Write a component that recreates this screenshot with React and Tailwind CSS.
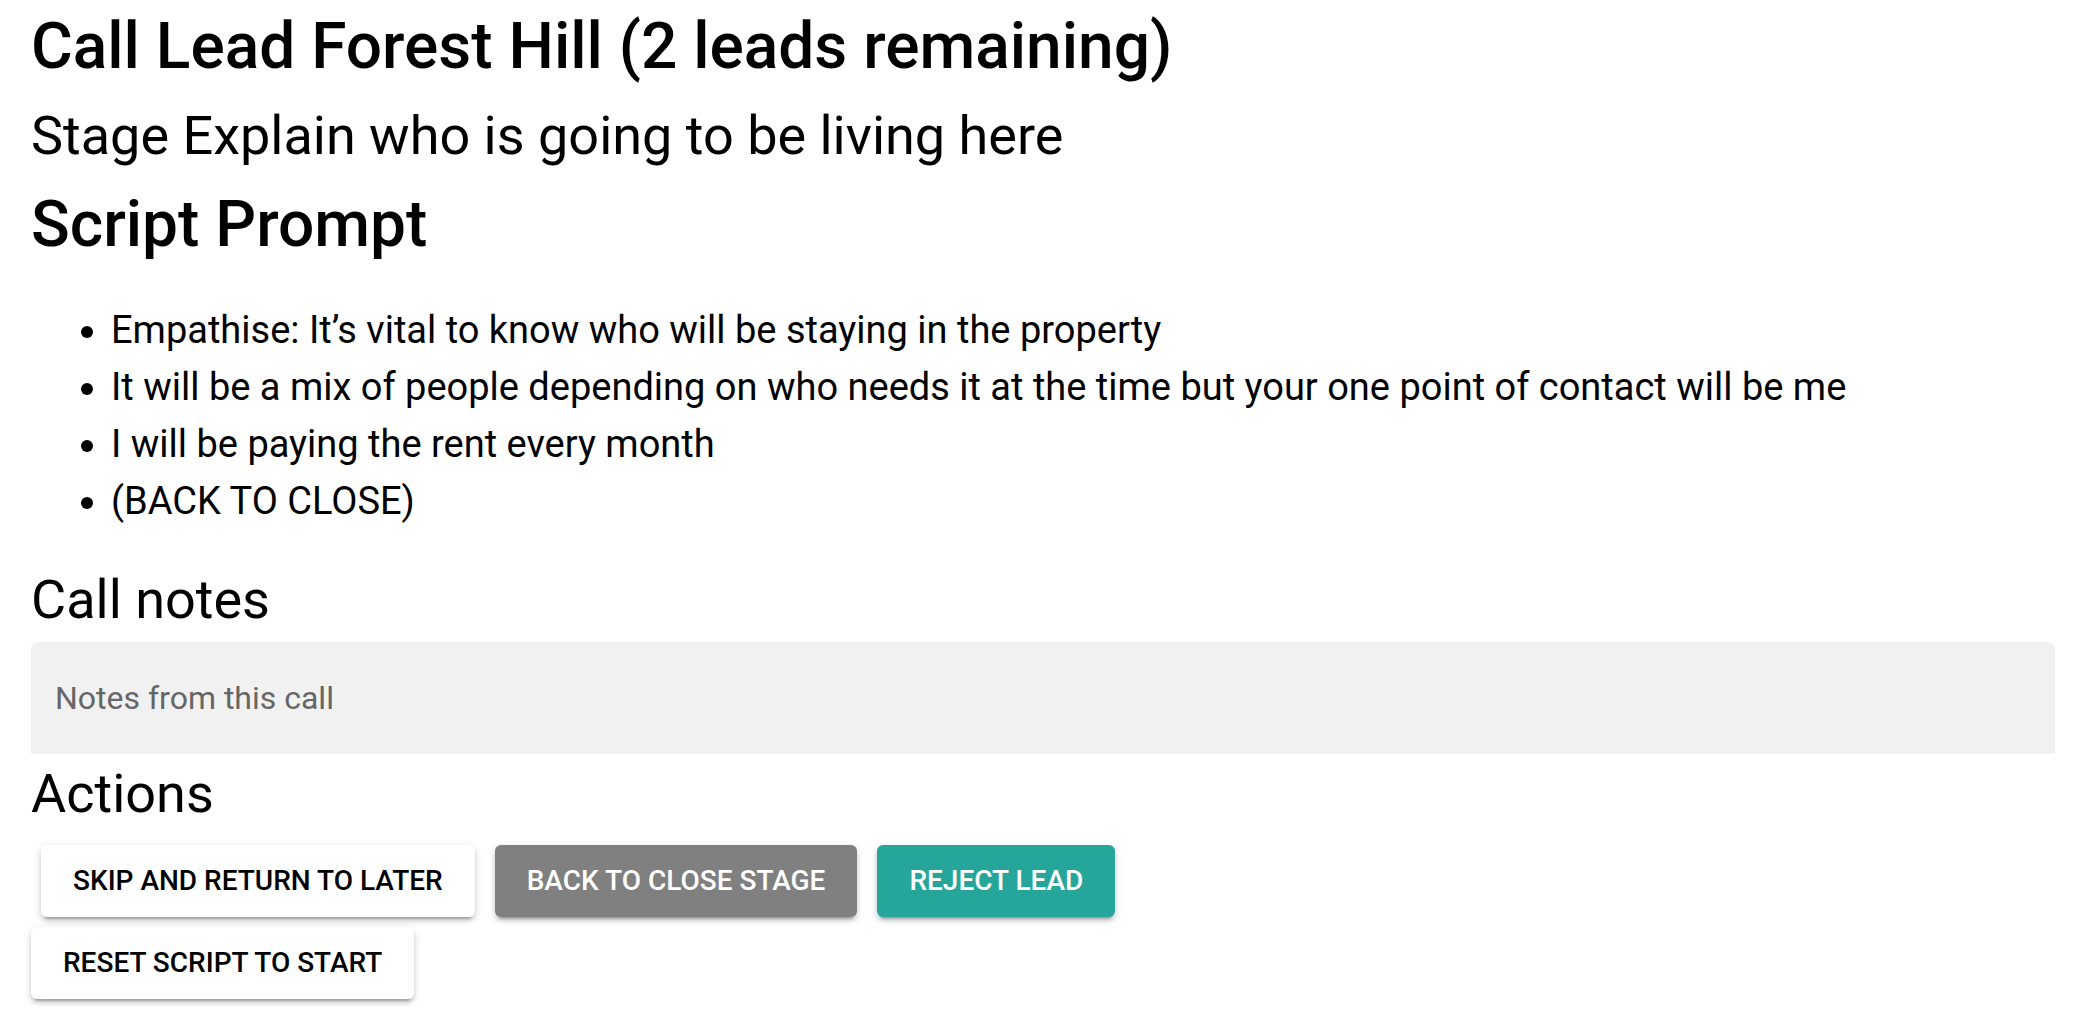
const prompts = [
  "Empathise: It’s vital to know who will be staying in the property",
  "It will be a mix of people depending on who needs it at the time but your one point of contact will be me",
  "I will be paying the rent every month",
  "(BACK TO CLOSE)",
];

function ActionButton({ className, children }) {
  return (
    <button
      type="button"
      className={
        "h-[72px] rounded-md px-8 text-[28px] leading-[72px] font-medium whitespace-nowrap shadow-[0_6px_2px_-4px_rgba(0,0,0,0.2),0_4px_4px_rgba(0,0,0,0.14),0_2px_10px_rgba(0,0,0,0.12)] " +
        className
      }
    >
      {children}
    </button>
  );
}

export default function App() {
  return (
    <main className="bg-white pt-[2px] pr-[29px] pb-5 pl-[31px] font-['Roboto',sans-serif] text-black">
      <h1 className="text-[64px] leading-[90px] font-medium">
        Call Lead Forest Hill (2 leads remaining)
      </h1>
      <h2 className="text-[54px] leading-[88px]">
        Stage Explain who is going to be living here
      </h2>
      <h1 className="text-[64px] leading-[90px] font-medium">Script Prompt</h1>
      <ul className="my-8 list-disc pl-20 text-[38px] leading-[57px]">
        {prompts.map((text) => (
          <li key={text}>{text}</li>
        ))}
      </ul>
      <h2 className="mb-1 text-[54px] leading-[76px]">
        <label htmlFor="notes" className="block">
          Call notes
        </label>
      </h2>
      <input
        id="notes"
        type="text"
        placeholder="Notes from this call"
        className="block h-28 w-full rounded-t-lg bg-[#f1f1f1] px-6 text-[32px] outline-none placeholder:text-[#666666]"
      />
      <h2 className="text-[54px] leading-[80px]">Actions</h2>
      <div className="mt-[11px] flex flex-wrap gap-5 px-[10px]">
        <ActionButton className="bg-white text-black">SKIP AND RETURN TO LATER</ActionButton>
        <ActionButton className="bg-[#808080] text-white">BACK TO CLOSE STAGE</ActionButton>
        <ActionButton className="bg-[#26a69a] text-white">REJECT LEAD</ActionButton>
      </div>
      <div className="mt-[10px] flex">
        <ActionButton className="bg-white text-black">RESET SCRIPT TO START</ActionButton>
      </div>
    </main>
  );
}
